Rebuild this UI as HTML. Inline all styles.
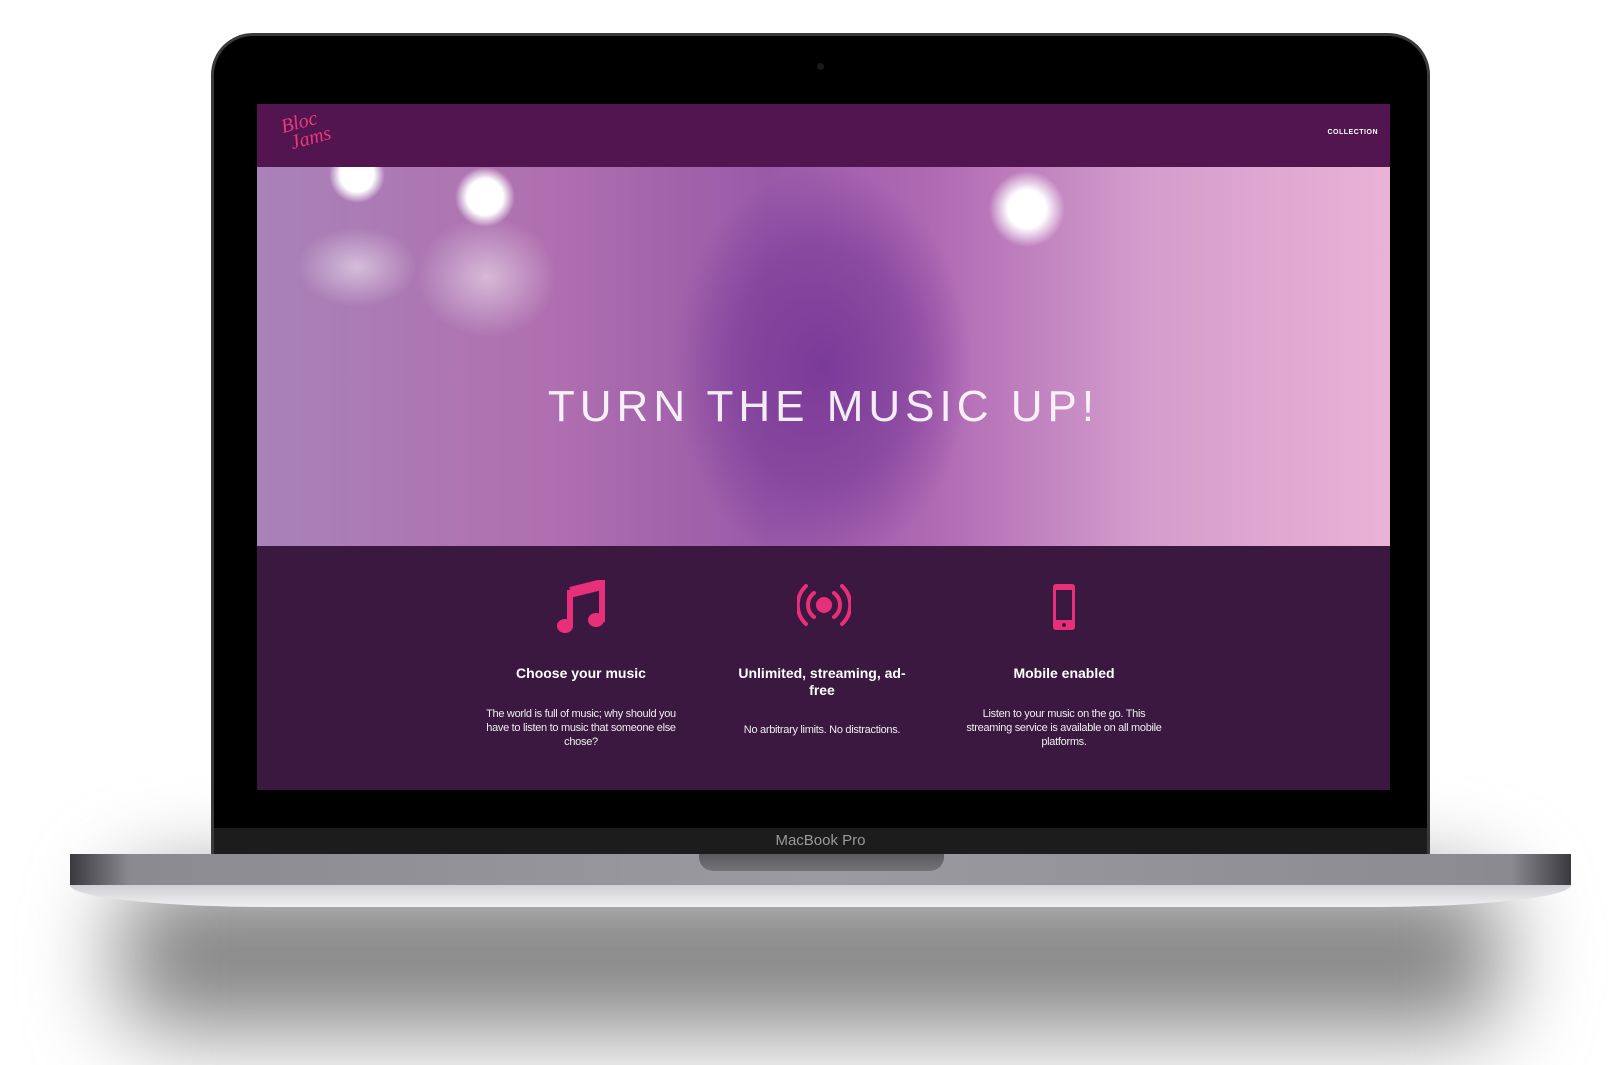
<!DOCTYPE html>
<html><head><meta charset="utf-8"><style>
*{margin:0;padding:0;box-sizing:border-box}
body{width:1617px;height:1065px;background:#fff;position:relative;overflow:hidden;font-family:"Liberation Sans",sans-serif}
.shadow{position:absolute;left:120px;top:880px;width:1380px;height:150px;background:#858585;filter:blur(45px);border-radius:40px}
.lid{position:absolute;left:211px;top:33px;width:1219px;height:830px;background:#000;border-radius:42px 42px 0 0;border:3px solid #3a3a3a;border-bottom:none}
.cam{position:absolute;left:817px;top:63px;width:7px;height:7px;border-radius:50%;background:#1a1a1a}
.screen{position:absolute;left:257px;top:104px;width:1133px;height:686px;overflow:hidden}
.nav{height:63px;background:#52154f;position:relative}
.logo{position:absolute;left:26px;top:8px;color:#e83a7d;font-family:"Liberation Serif",serif;font-style:italic;font-size:20px;line-height:18px;transform:rotate(-15deg)}
.coll{position:absolute;right:12px;top:25px;color:#fff;font-size:7px;font-weight:bold;letter-spacing:.5px}
.hero{height:379px;position:relative;background:
radial-gradient(ellipse 150px 200px at 565px 200px,#7a3a98 0%,rgba(122,58,152,.6) 60%,rgba(122,58,152,0) 100%),
radial-gradient(circle 28px at 100px 8px,#fff 60%,rgba(255,255,255,0)),
radial-gradient(circle 30px at 228px 30px,#fff 60%,rgba(255,255,255,0)),
radial-gradient(circle 38px at 770px 42px,#fff 50%,rgba(255,255,255,0)),
radial-gradient(ellipse 60px 40px at 100px 100px,rgba(255,255,255,.5),rgba(255,255,255,0)),
radial-gradient(ellipse 70px 60px at 230px 110px,rgba(255,255,255,.5),rgba(255,255,255,0)),
linear-gradient(90deg,#a882b8 0%,#b070b0 25%,#9a5aa8 45%,#b06ab4 60%,#d39ccc 78%,#eab2d6 100%)}
.hero h1{position:absolute;left:0;right:0;top:215px;text-align:center;color:#fff;font-weight:300;font-size:44px;letter-spacing:5px;opacity:.9}
.feat{height:244px;background:#3a1840;position:relative;color:#fff}
.col{position:absolute;top:0;width:200px;text-align:center}
.col svg{position:absolute;left:75px;top:34px}
.col h3{position:absolute;top:119px;left:0;right:0;font-size:14px;line-height:17px}
.col p{position:absolute;top:161px;left:0;right:0;font-size:11px;line-height:14px;color:#eee;letter-spacing:-.3px}
.chin{position:absolute;left:214px;top:828px;width:1213px;height:26px;background:#1c1c1c;text-align:center;color:#999;font-size:15px;line-height:26px}
.base{position:absolute;left:70px;top:854px;width:1501px;height:31px;background:linear-gradient(90deg,#3a3a3e,#8a8a90 4%,#9a9aa0 50%,#8a8a90 96%,#3a3a3e)}
.base2{position:absolute;left:70px;top:885px;width:1501px;height:22px;background:linear-gradient(#d0d0d4,#f0f0f2);border-radius:0 0 200px 200px/0 0 22px 22px}
.notch{position:absolute;left:699px;top:854px;width:245px;height:17px;background:linear-gradient(#5a5a5e,#747478);border-radius:0 0 14px 14px}
</style></head><body>
<div class="shadow"></div>
<div class="lid"></div>
<div class="cam"></div>
<div class="screen">
 <div class="nav"><div class="logo">Bloc<br>&nbsp;Jams</div><div class="coll">COLLECTION</div></div>
 <div class="hero"><h1>TURN THE MUSIC UP!</h1></div>
 <div class="feat">
  <div class="col" style="left:224px">
   <svg width="50" height="54" viewBox="0 0 50 54"><path d="M14 10 L46 2 V42" stroke="#e8307a" stroke-width="6" fill="none"/><path d="M14 10 V46" stroke="#e8307a" stroke-width="6"/><ellipse cx="9" cy="46" rx="8" ry="7" fill="#e8307a"/><ellipse cx="40" cy="40" rx="8" ry="7" fill="#e8307a"/><path d="M14 10 L46 2 V10 L14 18Z" fill="#e8307a"/></svg>
   <h3>Choose your music</h3>
   <p>The world is full of music; why should you have to listen to music that someone else chose?</p>
  </div>
  <div class="col" style="left:465px">
   <svg width="54" height="50" viewBox="0 0 54 50"><circle cx="27" cy="25" r="8" fill="#e8307a"/><g stroke="#e8307a" stroke-width="4" fill="none" stroke-linecap="round"><path d="M17 13 A15 15 0 0 0 17 37"/><path d="M37 13 A15 15 0 0 1 37 37"/><path d="M9 6 A26 26 0 0 0 9 44"/><path d="M45 6 A26 26 0 0 1 45 44"/></g></svg>
   <h3>Unlimited, streaming, ad-<br>free</h3>
   <p style="top:177px">No arbitrary limits. No distractions.</p>
  </div>
  <div class="col" style="left:707px">
   <svg width="50" height="54" viewBox="0 0 50 54"><rect x="14" y="4" width="22" height="46" rx="3" fill="#e8307a"/><rect x="17" y="10" width="16" height="30" fill="#3a1840"/><circle cx="25" cy="45" r="2" fill="#3a1840"/></svg>
   <h3>Mobile enabled</h3>
   <p>Listen to your music on the go. This streaming service is available on all mobile platforms.</p>
  </div>
 </div>
</div>
<div class="chin">MacBook Pro</div>
<div class="base"></div>
<div class="base2"></div>
<div class="notch"></div>
</body></html>
